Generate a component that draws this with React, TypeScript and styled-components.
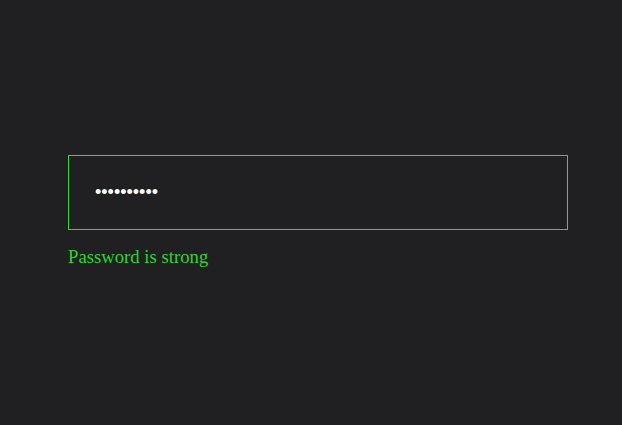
import styled, { createGlobalStyle } from "styled-components";

const GlobalStyle = createGlobalStyle`
  html, body {
    margin: 0;
    padding: 0;
    background: #202022;
  }
  #root {
    min-height: 100vh;
  }
`;

const Page = styled.main`
  min-height: 100vh;
  display: flex;
  flex-direction: column;
  justify-content: center;
  padding: 0 54px 2px 68px;
  box-sizing: border-box;
`;

const Field = styled.div`
  display: flex;
  flex-direction: column;
  gap: 16px;
`;

const PasswordInput = styled.input<{ $strong: boolean }>`
  width: 100%;
  height: 75px;
  box-sizing: border-box;
  padding: 0 26px;
  border: 1px solid ${(p) => (p.$strong ? "#2edc2e" : "#dc2e2e")};
  background: transparent;
  color: #ffffff;
  font-family: "Liberation Sans", Arial, sans-serif;
  font-size: 18px;
  outline: none;
`;

const Message = styled.div<{ $strong: boolean }>`
  font-family: "Liberation Serif", "Times New Roman", serif;
  font-size: 18.72px;
  line-height: 22px;
  color: ${(p) => (p.$strong ? "#2ed42e" : "#e04040")};
`;

export default function App(): JSX.Element {
  const strong = true;
  return (
    <>
      <GlobalStyle />
      <Page>
        <Field>
          <PasswordInput
            type="password"
            defaultValue="abcdefghij"
            $strong={strong}
          />
          <Message $strong={strong}>Password is strong</Message>
        </Field>
      </Page>
    </>
  );
}
